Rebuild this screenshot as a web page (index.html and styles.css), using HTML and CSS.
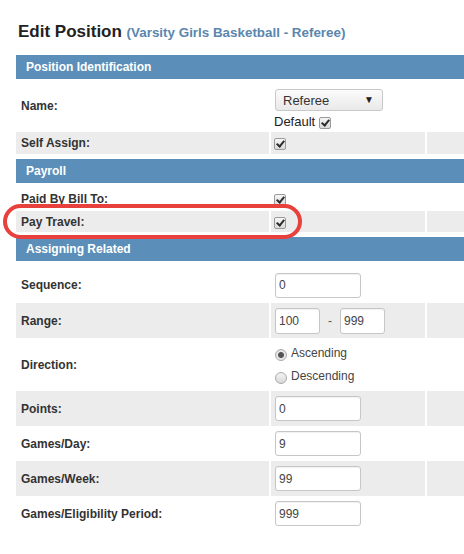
FILE: index.html
```html
<!DOCTYPE html>
<html lang="en">
<head>
    <meta charset="UTF-8">
    <meta name="viewport" content="width=device-width, initial-scale=1.0">
    <title>Edit Position</title>
    <link rel="stylesheet" href="styles.css">
</head>
<body>

    <div class="page">
        <h1 class="title">Edit Position <span class="subtitle">(Varsity Girls Basketball - Referee)</span></h1>

        <div class="section-head">Position Identification</div>
        <div class="row row-name">
            <div class="label">Name:</div>
            <div class="value value-stack">
                <span class="select-wrap">
                    <select>
                        <option>Referee</option>
                    </select>
                </span>
                <label class="default">Default <input type="checkbox" class="check" checked></label>
            </div>
            <div class="extra"></div>
        </div>
        <div class="row row-slim alt">
            <div class="label">Self Assign:</div>
            <div class="value"><input type="checkbox" class="check" checked></div>
            <div class="extra"></div>
        </div>

        <div class="section-head">Payroll</div>
        <div class="row row-paid">
            <div class="label">Paid By Bill To:</div>
            <div class="value"><input type="checkbox" class="check" checked></div>
            <div class="extra"></div>
        </div>
        <div class="row row-travel alt">
            <div class="label">Pay Travel:</div>
            <div class="value"><input type="checkbox" class="check" checked></div>
            <div class="extra"></div>
            <span class="highlight"></span>
        </div>

        <div class="section-head">Assigning Related</div>
        <div class="row row-first">
            <div class="label">Sequence:</div>
            <div class="value"><input type="text" class="field" value="0"></div>
            <div class="extra"></div>
        </div>
        <div class="row alt">
            <div class="label">Range:</div>
            <div class="value">
                <input type="text" class="field field-short" value="100">
                <span class="dash">-</span>
                <input type="text" class="field field-short" value="999">
            </div>
            <div class="extra"></div>
        </div>
        <div class="row row-radio">
            <div class="label">Direction:</div>
            <div class="value value-stack radios">
                <label><input type="radio" name="direction" class="radio" checked> Ascending</label>
                <label><input type="radio" name="direction" class="radio"> Descending</label>
            </div>
            <div class="extra"></div>
        </div>
        <div class="row alt">
            <div class="label">Points:</div>
            <div class="value"><input type="text" class="field" value="0"></div>
            <div class="extra"></div>
        </div>
        <div class="row">
            <div class="label">Games/Day:</div>
            <div class="value"><input type="text" class="field" value="9"></div>
            <div class="extra"></div>
        </div>
        <div class="row alt">
            <div class="label">Games/Week:</div>
            <div class="value"><input type="text" class="field" value="99"></div>
            <div class="extra"></div>
        </div>
        <div class="row">
            <div class="label">Games/Eligibility Period:</div>
            <div class="value"><input type="text" class="field" value="999"></div>
            <div class="extra"></div>
        </div>
    </div>

</body>
</html>
```

FILE: styles.css
```css
body {
    margin: 0;
    font-family: "Liberation Sans", Arial, sans-serif;
    color: #333;
    background-color: #fff;
}
.page {
    padding-left: 16px;
}
.title {
    margin: 22px 0 12px 2px;
    font-size: 17px;
    line-height: 20px;
    color: #222;
}
.subtitle {
    font-size: 13.4px;
    color: #5b86ad;
}
.section-head {
    height: 24px;
    line-height: 24px;
    padding-left: 10px;
    background-color: #5b8fb9;
    color: #fff;
    font-size: 12px;
    font-weight: bold;
}
.row + .section-head { margin-top: 5px; }

.row {
    display: grid;
    grid-template-columns: 253px 154px 1fr;
    column-gap: 2px;
    height: 35px;
}
.row > div {
    display: flex;
    align-items: center;
}
.row.alt > div { background-color: #ececec; }
.label {
    padding-left: 5px;
    font-size: 12px;
    font-weight: bold;
}
.value { padding-left: 3px; }
.value-stack {
    flex-direction: column;
    align-items: flex-start !important;
    justify-content: center;
}

.row-name { height: 53px; }
.row-name .value { justify-content: flex-start; padding-top: 10px; }
.row-slim { height: 22px; }
.row-paid { height: 28px; }
.row-paid > div { padding-top: 3px; }
.row-travel { height: 21px; position: relative; }
.row-first { height: 42px; }
.row-first > div { padding-top: 6px; }
.row-radio { height: 53px; }

/* select box */
.select-wrap {
    position: relative;
    display: inline-block;
    margin-left: 1px;
}
.select-wrap select {
    appearance: none;
    width: 108px;
    height: 22px;
    padding: 0 7px;
    border: 1px solid #c8c8c8;
    border-radius: 3px;
    background: linear-gradient(#fbfbfb, #e9e9e9);
    font-family: "Liberation Sans", Arial, sans-serif;
    font-size: 13px;
    color: #333;
}
.select-wrap::after {
    content: "\25BC";
    position: absolute;
    right: 9px;
    top: 5px;
    font-size: 10px;
    color: #222;
    pointer-events: none;
}
.default {
    display: flex;
    align-items: center;
    gap: 4px;
    margin-top: 3px;
    font-size: 13px;
    line-height: 15px;
    color: #222;
}

/* checkbox */
.check {
    appearance: none;
    position: relative;
    width: 12px;
    height: 12px;
    margin: 2px 0 0 0;
    border: 1px solid #9a9a9a;
    border-radius: 2px;
    background: linear-gradient(#f6f6f6, #d9d9d9);
}
.check:checked::after {
    content: "";
    position: absolute;
    left: 3px;
    top: 0;
    width: 3px;
    height: 6px;
    border: solid #2b2b2b;
    border-width: 0 2px 2px 0;
    transform: rotate(40deg);
}
.default .check { margin-top: 3px; }

/* text fields */
.field {
    box-sizing: border-box;
    width: 86px;
    height: 25px;
    margin-left: 1px;
    padding: 0 3px;
    border: 1px solid #c6c6c6;
    border-radius: 3px;
    box-shadow: inset 0 1px 1px rgba(0,0,0,0.06);
    font-family: "Liberation Sans", Arial, sans-serif;
    font-size: 12px;
    color: #444;
}
.field-short { width: 45px; height: 26px; }
.dash {
    margin: 0 7px 0 8px;
    font-size: 12px;
    color: #555;
}

/* radios */
.radios label {
    display: flex;
    align-items: center;
    gap: 4px;
    height: 23px;
    margin-left: 1px;
    font-size: 12px;
    color: #444;
}
.radio {
    appearance: none;
    width: 12px;
    height: 12px;
    margin: 3px 0 0 0;
    border: 1px solid #aaa;
    border-radius: 50%;
    background: linear-gradient(#f4f4f4, #d8d8d8);
}
.radio:checked {
    background: radial-gradient(circle, #555 0 2.5px, #e6e6e6 3.5px);
}

/* red callout */
.highlight {
    position: absolute;
    left: -13px;
    top: -7px;
    width: 299px;
    height: 35px;
    box-sizing: border-box;
    border: 4px solid #e8403c;
    border-radius: 18px;
    pointer-events: none;
}
```
